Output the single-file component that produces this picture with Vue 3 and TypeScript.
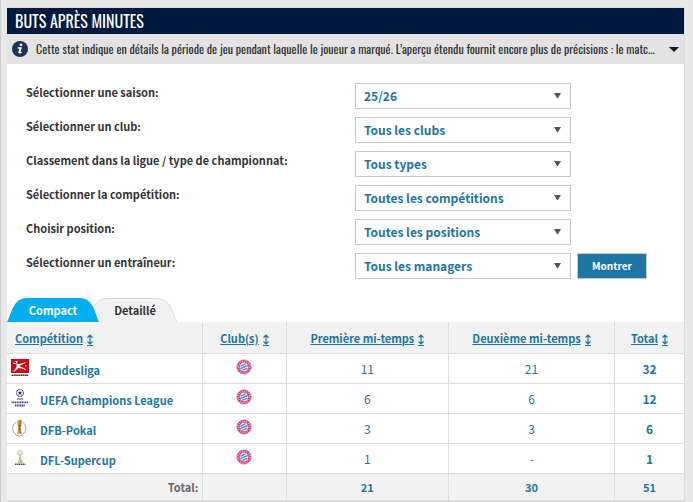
<script setup lang="ts">
import { ref } from 'vue'

interface Filter {
  id: string
  label: string
  options: string[]
}

interface Row {
  logo: 'bundesliga' | 'ucl' | 'pokal' | 'supercup'
  name: string
  first: string
  second: string
  total: string
}

const filters: Filter[] = [
  { id: 'saison', label: 'Sélectionner une saison:', options: ['25/26'] },
  { id: 'club', label: 'Sélectionner un club:', options: ['Tous les clubs'] },
  { id: 'type', label: 'Classement dans la ligue / type de championnat:', options: ['Tous types'] },
  { id: 'competition', label: 'Sélectionner la compétition:', options: ['Toutes les compétitions'] },
  { id: 'position', label: 'Choisir position:', options: ['Toutes les positions'] },
  { id: 'manager', label: 'Sélectionner un entraîneur:', options: ['Tous les managers'] },
]

const columns = ['Compétition', 'Club(s)', 'Première mi-temps', 'Deuxième mi-temps', 'Total']

const rows: Row[] = [
  { logo: 'bundesliga', name: 'Bundesliga', first: '11', second: '21', total: '32' },
  { logo: 'ucl', name: 'UEFA Champions League', first: '6', second: '6', total: '12' },
  { logo: 'pokal', name: 'DFB-Pokal', first: '3', second: '3', total: '6' },
  { logo: 'supercup', name: 'DFL-Supercup', first: '1', second: '-', total: '1' },
]

const tab = ref<'compact' | 'detail'>('compact')
</script>

<template>
  <main class="page">
    <section class="card">
      <h1 class="title">BUTS APRÈS MINUTES</h1>
      <div class="info">
        <svg class="info-icon" viewBox="0 0 16 16" aria-hidden="true">
          <circle cx="8" cy="8" r="8" fill="#1d3257" />
          <circle cx="9" cy="3.8" r="1.4" fill="#fff" />
          <path d="M5.6 6.3h4.2L8.6 11.3l1.4-.5-.2 1c-1.4 1-3.8 1.2-3.4-.8l.8-3.6H5.4z" fill="#fff" />
        </svg>
        <p class="info-text">Cette stat indique en détails la période de jeu pendant laquelle le joueur a marqué. L’aperçu étendu fournit encore plus de précisions : le matc...</p>
        <svg class="info-arrow" viewBox="0 0 10 5" aria-hidden="true"><path d="M0 0h10L5 5z" fill="#0b1733" /></svg>
      </div>

      <form class="filters" @submit.prevent>
        <div v-for="(f, i) in filters" :key="f.id" class="filter">
          <label :for="f.id">{{ f.label }}</label>
          <div class="select">
            <select :id="f.id">
              <option v-for="o in f.options" :key="o">{{ o }}</option>
            </select>
            <svg class="caret" viewBox="0 0 7 6" aria-hidden="true"><path d="M0 0h7L4 5H3z" fill="#555" /></svg>
          </div>
          <button v-if="i === filters.length - 1" class="submit" type="submit">Montrer</button>
        </div>
      </form>

      <div class="tabs" role="tablist">
        <button class="tab" role="tab" type="button" :aria-selected="tab === 'compact'" @click="tab = 'compact'">
          <svg class="tab-shape" viewBox="0 0 92 24" preserveAspectRatio="none" aria-hidden="true">
            <path :class="tab === 'compact' ? 'on' : 'off'" d="M0 24C5 15 6 0 20 0H73C86 0 88 15 92 24" />
          </svg>
          <span>Compact</span>
        </button>
        <button class="tab second" role="tab" type="button" :aria-selected="tab === 'detail'" @click="tab = 'detail'">
          <svg class="tab-shape" viewBox="0 0 84 24" preserveAspectRatio="none" aria-hidden="true">
            <path :class="tab === 'detail' ? 'on' : 'off'" d="M0 24V10C4 4 6 .5 14 .5H64C78 .5 79 15 84 24" />
          </svg>
          <span>Detaillé</span>
        </button>
      </div>

      <table class="stats">
        <colgroup>
          <col class="c-comp" /><col class="c-club" /><col class="c-first" /><col class="c-second" /><col class="c-total" />
        </colgroup>
        <thead>
          <tr>
            <th v-for="c in columns" :key="c" scope="col">
              <a href="#"><span class="sort-text">{{ c }}</span><svg class="sort" viewBox="0 0 6 12" aria-hidden="true">
                <path d="M3 1v9M.5 3.5L3 1l2.5 2.5M.5 7.5L3 10l2.5-2.5" fill="none" stroke="#1d75a3" stroke-width="1.2" />
                <path d="M0 11.5h6" stroke="#1d75a3" />
              </svg></a>
            </th>
          </tr>
        </thead>
        <tbody>
          <tr v-for="r in rows" :key="r.name">
            <td>
              <div class="comp">
                <svg v-if="r.logo === 'bundesliga'" class="logo" viewBox="0 0 18 18" aria-hidden="true">
                  <path d="M0 0h18v14H0z" fill="#d20515" />
                  <circle cx="5.6" cy="2.8" r="1.1" fill="#fff" />
                  <path d="M2 3.6l3.6.8 3 .6 5.6-1.8.3.8-5 2.2-.9 1.2 3 1.2 3.4 1.6-.4.7-4-1.3-3.1-.7-2 2-2.6 1.5-.8-.5 2-1.7 1.4-2.4.2-2.2L2 4.6z" fill="#fff" />
                  <circle cx="14.8" cy="6.8" r=".8" fill="#fff" />
                  <path d="M.5 16.2h17" stroke="#333" stroke-width="1.6" stroke-dasharray="1.5 .4" />
                </svg>
                <svg v-else-if="r.logo === 'ucl'" class="logo" viewBox="0 0 18 18" aria-hidden="true">
                  <circle cx="9" cy="4" r="3.6" fill="#eef0fa" stroke="#30317b" stroke-width=".8" stroke-dasharray="2.2 .7" />
                  <path d="M9 1.8l.6 1.4 1.6.1-1.2 1 .4 1.6L9 5l-1.4.9.4-1.6-1.2-1 1.6-.1zM5.5 1.6l1.3-.8.1 1.4zM12.5 1.6l-1.3-.8-.1 1.4zM6 6.5l1.4-.2.4 1.2zM12 6.5l-1.4-.2-.4 1.2z" fill="#22246d" />
                  <path d="M6 10h6" stroke="#55569a" stroke-width="1.7" stroke-dasharray="1.2 .4" />
                  <path d="M.5 13.4h17" stroke="#3d3e84" stroke-width="1.9" stroke-dasharray="1.2 .5" />
                  <path d="M4 16.5h10" stroke="#3d3e84" stroke-width="1.9" stroke-dasharray="1.2 .5" />
                </svg>
                <svg v-else-if="r.logo === 'pokal'" class="logo" viewBox="0 0 18 18" aria-hidden="true">
                  <path d="M5 3.5C.2 6 .6 13 5.5 16M11.5 3c4.6 3.2 4.4 10-.5 13" fill="none" stroke="#999" stroke-width=".9" />
                  <path d="M6 1.8L10.6.5l.3 4-1.2 4 1.2 6.5H6.2L7.4 8 6.2 5z" fill="#d9a336" />
                  <path d="M9.2 1v3.5L8.4 8l1 6" fill="none" stroke="#8b631d" stroke-width="1" />
                  <path d="M7 7h3M7 10h2.8" stroke="#4e774e" />
                  <path d="M5.4 16l3 1.2 3-1.2" fill="none" stroke="#eb8d97" stroke-width="1.2" />
                </svg>
                <svg v-else class="logo" viewBox="0 0 18 18" aria-hidden="true">
                  <circle cx="9" cy="3.5" r="2.5" fill="#e6e6e4" stroke="#bbb" stroke-width=".6" />
                  <path d="M7.8 5.5h2.8L10 9l2 5H6.4L8.6 9z" fill="#c8c9c7" />
                  <path d="M10 5.5L9.3 9l2.3 4.8H10L8 9z" fill="#dfb32f" />
                  <path d="M6.2 3.6V5M11.8 3.6V5" stroke="#dfc468" />
                  <path d="M4 15.3h10.5" stroke="#555" stroke-width="1.5" stroke-dasharray="1.5 .4" />
                </svg>
                <a href="#">{{ r.name }}</a>
              </div>
            </td>
            <td>
              <svg class="club" viewBox="0 0 16 16" role="img" aria-label="Bayern Munich">
                <circle cx="8" cy="8" r="7.2" fill="#ee2450" stroke="#a3aee6" stroke-width=".9" />
                <circle cx="8" cy="8" r="5.6" fill="none" stroke="#fbc3d0" stroke-width="1.1" stroke-dasharray="1 1" />
                <circle cx="8" cy="8" r="4.4" fill="#fff" />
                <path d="M4.4 7.3l5.2-2.6M4.2 9.7l7.6-3.2M6.3 11.3l5.2-2.2" stroke="#4388ed" stroke-width="1.4" />
              </svg>
            </td>
            <td><a href="#">{{ r.first }}</a></td>
            <td><a href="#">{{ r.second }}</a></td>
            <td><a class="strong" href="#">{{ r.total }}</a></td>
          </tr>
        </tbody>
        <tfoot>
          <tr>
            <td>Total:</td>
            <td></td>
            <td><a href="#">21</a></td>
            <td><a href="#">30</a></td>
            <td><a href="#">51</a></td>
          </tr>
        </tfoot>
      </table>
    </section>
  </main>
</template>

<style>
body {
  background: #e8e8e8;
}
</style>

<style scoped>
.page {
  box-sizing: border-box;
  padding: 7px 8px 0 6px;
  border-left: 1px solid #ccc;
  font-family: "Noto Sans CJK SC", "Noto Sans", sans-serif;
  font-size: 11px;
  line-height: 18px;
  color: #333;
}
.page * {
  box-sizing: border-box;
}
.card {
  background: #fff;
  border-top: 1px solid #ddd;
  border-right: 1px solid #ddd;
  border-bottom: 2px solid #ddd;
}
.title {
  margin: 0;
  padding: 0 8px;
  background: #001a3f;
  color: #fff;
  font: 400 16px/26px Oswald, "Liberation Sans Narrow", "Liberation Sans", sans-serif;
}
.info {
  display: flex;
  align-items: center;
  gap: 8px;
  height: 30px;
  padding: 0 5px;
  background: #e3e3e3;
}
.info-icon {
  flex: none;
  width: 16px;
  height: 16px;
}
.info-text {
  flex: 1;
  min-width: 0;
  margin: 0;
  overflow: hidden;
  white-space: nowrap;
  font: 400 12px/20px Oswald, "Liberation Sans Narrow", "Liberation Sans", sans-serif;
}
.info-arrow {
  flex: none;
  width: 10px;
  height: 5px;
}
.filters {
  display: grid;
  gap: 8px;
  padding: 19px 19px;
}
.filter {
  display: grid;
  grid-template-columns: minmax(0, 329px) 216px auto;
  justify-content: start;
  height: 26px;
}
.filter label {
  font-weight: 700;
}
.select {
  position: relative;
}
.select select {
  appearance: none;
  display: block;
  width: 100%;
  height: 26px;
  margin: 0;
  padding: 0 24px 0 8px;
  border: 1px solid #c8c8c8;
  border-radius: 0;
  background: #fff;
  color: #1d75a3;
  font: inherit;
  font-size: 12px;
  font-weight: 700;
}
.caret {
  position: absolute;
  top: 10px;
  right: 10px;
  width: 7px;
  height: 6px;
  pointer-events: none;
}
.submit {
  width: 70px;
  height: 26px;
  margin-left: 6px;
  padding: 0;
  border: 1px solid #c8c8c8;
  background: #1d75a3;
  color: #fff;
  font: inherit;
  font-size: 10px;
  font-weight: 700;
}
.tabs {
  display: flex;
  height: 24px;
}
.tab {
  position: relative;
  z-index: 1;
  width: 92px;
  padding: 0;
  border: 0;
  background: none;
  color: #333;
  font: inherit;
  font-weight: 700;
}
.tab[aria-selected="true"] {
  color: #fff;
}
.tab.second {
  z-index: 0;
  width: 84px;
  margin-left: -6px;
}
.tab span {
  position: relative;
}
.tab-shape {
  position: absolute;
  inset: 0;
  width: 100%;
  height: 100%;
}
.tab-shape .on {
  fill: #00aeef;
}
.tab-shape .off {
  fill: #f2f2f2;
  stroke: #ddd;
}
.stats {
  width: 100%;
  table-layout: fixed;
  border-collapse: separate;
  border-spacing: 0;
}
.c-comp { width: 29%; }
.c-club { width: 12.3%; }
.c-first { width: 24%; }
.c-second { width: 24.5%; }
.c-total { width: 10.2%; }
.stats th,
.stats td {
  padding: 0;
  border-right: 1px solid #ddd;
  border-bottom: 1px solid #ddd;
  text-align: center;
}
.stats th:last-child,
.stats td:last-child {
  border-right: 0;
}
.stats th {
  height: 32px;
  background: #f2f2f2;
}
.stats th:first-child {
  padding-left: 8px;
  text-align: left;
}
.stats a {
  color: #1d75a3;
  text-decoration: none;
}
.sort-text {
  text-decoration: underline;
}
.sort {
  width: 6px;
  height: 12px;
  margin-left: 4px;
  vertical-align: -3px;
}
.stats tbody td {
  height: 30px;
}
.stats tbody td:nth-child(n + 3) {
  font-size: 12px;
}
.comp {
  display: flex;
  gap: 11px;
  padding-left: 4px;
}
.comp a {
  padding-top: 2px;
  font-weight: 700;
}
.logo {
  width: 18px;
  height: 18px;
}
.club {
  display: block;
  width: 16px;
  height: 16px;
  margin: 0 auto 4px;
}
.stats .strong {
  font-weight: 700;
}
.stats tfoot td {
  height: 26px;
  border-bottom: 0;
  background: #f2f2f2;
  color: #666;
  font-weight: 700;
}
.stats tfoot td:first-child {
  padding-right: 4px;
  text-align: right;
}
</style>
